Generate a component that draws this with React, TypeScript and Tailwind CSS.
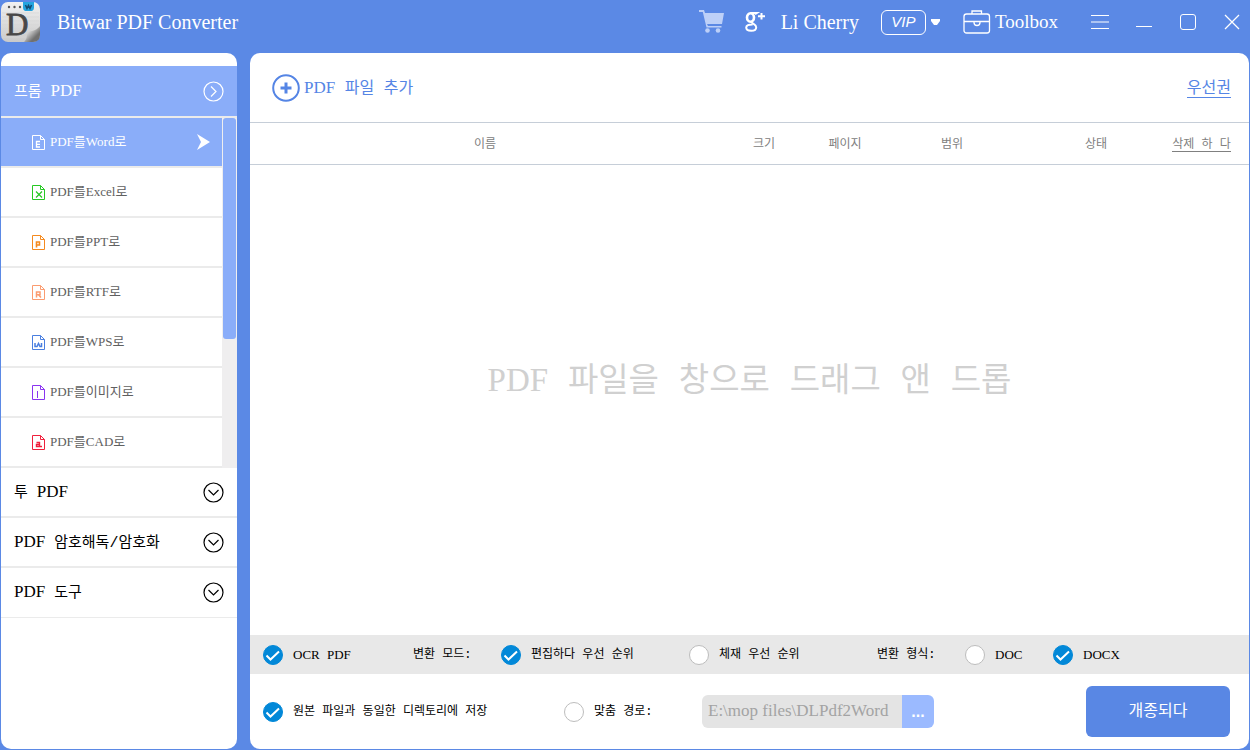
import React, { useState } from 'react';

interface Format {
  label: string;
  color: string;
  mark: React.ReactNode;
}

const FORMATS: Format[] = [
  { label: 'PDF를Word로', color: '#ffffff', mark: <path d="M8 6.500H4.500v5.500H8M4.500 9.300H8" strokeWidth="1.300" /> },
  { label: 'PDF를Excel로', color: '#27c824', mark: <path d="M4 6.500l6 6M10 6.500l-6 6" strokeWidth="1.200" /> },
  { label: 'PDF를PPT로', color: '#f58a1f', mark: <path d="M4.500 12.500V7h3v3h-3" strokeWidth="1.600" /> },
  { label: 'PDF를RTF로', color: '#fb9c70', mark: <path d="M4.500 12.500V7H8v2.800H4.500m2 0L9 12.500" strokeWidth="1.500" /> },
  { label: 'PDF를WPS로', color: '#4a7fe0', mark: <path d="M3 8v3.500h2L6.500 8.500 8 11.500h1.500V8" strokeWidth="1.500" /> },
  { label: 'PDF를이미지로', color: '#8a35f0', mark: <path d="M5.500 6v7" /> },
  { label: 'PDF를CAD로', color: '#f0203c', mark: <path d="M4.500 7.500h3v4h-3V9.500h3M7.500 11.500H10" strokeWidth="1.400" /> },
];

const SECTIONS = ['투 PDF', 'PDF 암호해독/암호화', 'PDF 도구'];

interface MixedProps {
  text: string;
  latin: string;
}

// Latin words are set in the serif face, Hangul and spaces keep the base face
const Mixed: React.FC<MixedProps> = ({ text, latin }) => (
  <>
    {text.split(/([A-Za-z0-9]+)/).map((part, i) =>
      i % 2 ? (
        <span key={i} className={`font-['Liberation_Serif',serif] ${latin}`}>{part}</span>
      ) : (
        part
      )
    )}
  </>
);

const AppLogo = () => (
  <svg width="40" height="42" viewBox="0 0 40 42" aria-hidden="true">
    <defs>
      <linearGradient id="paper" x1="0" y1="0" x2="0" y2="1">
        <stop offset="0" stopColor="#f1f1f1" />
        <stop offset="1" stopColor="#c9c9c9" />
      </linearGradient>
      <linearGradient id="curl" x1="0" y1="0" x2="1" y2="1">
        <stop offset="0.150" stopColor="#fafafa" />
        <stop offset="0.450" stopColor="#b5b5b5" />
        <stop offset="0.700" stopColor="#707070" />
      </linearGradient>
    </defs>
    <rect x="0" y="1" width="39" height="40" rx="7" fill="url(#paper)" />
    <path d="M1 12h37M1 16h37M1 20h37M1 24h37M1 28h37M1 32h33M1 36h29" stroke="#d6d6d6" strokeWidth=".7" />
    <g fill="#555">
      <circle cx="8" cy="6" r="1.200" />
      <circle cx="13.500" cy="6" r="1.200" />
      <circle cx="19" cy="6" r="1.200" />
    </g>
    <path d="M22 1h11v6q0 2-2 3h-7q-2-1-2-3z" fill="#25a4df" />
    <path d="M24.500 4l1.500 3.500L27.500 4.500 29 7.500 30.500 4" fill="none" stroke="#134a70" strokeWidth="1.500" />
    <text x="5" y="34" fontSize="31" fontFamily="Liberation Serif, serif" fill="#484848" stroke="#484848" strokeWidth=".8">D</text>
    <path d="M23 41q3-3 3-7 0-4 5-4 5-1 8-5v9q0 7-7 7z" fill="url(#curl)" />
  </svg>
);

const CartIcon = () => (
  <svg width="26" height="24" viewBox="0 0 26 24" fill="#bdd0f8" aria-hidden="true">
    <path d="M0 0h5l1 3h19l-2 11H8l1 2h13.500v1.500H7.500L3.800 2H0z" />
    <circle cx="8.500" cy="20.500" r="2.300" />
    <circle cx="19" cy="20.500" r="2.300" />
  </svg>
);

const GooglePlusIcon = () => (
  <svg width="20" height="20" viewBox="0 0 20 20" fill="none" stroke="#fff" aria-hidden="true">
    <ellipse cx="5.500" cy="5.500" rx="3.500" ry="4.200" strokeWidth="2.600" />
    <path d="M5.500.9H12L10 2.200M7 9.800c-1 2 4.200 2.200 4.200 5.400 0 2.200-2.200 3.600-5 3.600-3.200 0-5-1.200-5-3.200 0-2.200 2.600-3.200 6.500-3.100" strokeWidth="2" />
    <path d="M16.500 1v6.500M13 4.200h7" strokeWidth="2" />
  </svg>
);

const ToolboxIcon = () => (
  <svg width="28" height="24" viewBox="0 0 28 24" fill="none" stroke="#fff" strokeWidth="1.300" aria-hidden="true">
    <rect x="1" y="4" width="25.500" height="19" rx="2.500" />
    <path d="M9 4V1h9.500v3M1 11.500h9.500M17 11.500h9.500M11 11.500h6v1a3 3 0 0 1-6 0z" />
  </svg>
);

const FormatIcon: React.FC<{ color: string; mark: React.ReactNode }> = ({ color, mark }) => (
  <svg width="14" height="15" viewBox="0 0 14 15" fill="none" stroke={color} aria-hidden="true">
    <path d="M.5.5h8l4 4v10H.5z" />
    <path d="M8.500.5v4h4" />
    {mark}
  </svg>
);

const CircleChevron: React.FC<{ open?: boolean }> = ({ open }) => (
  <svg width="21" height="21" viewBox="0 0 21 21" fill="none" stroke="currentColor" strokeWidth="1.200" aria-hidden="true">
    <circle cx="10.500" cy="10.500" r="9.500" />
    <path d={open ? 'M8 5.500l5 5-5 5' : 'M5.500 8l5 5 5-5'} />
  </svg>
);

interface ChoiceProps {
  type: 'checkbox' | 'radio';
  label: string;
  name?: string;
  checked: boolean;
  onChange: () => void;
}

const Choice: React.FC<ChoiceProps> = ({ type, label, name, checked, onChange }) => (
  <label className="flex items-center gap-2.5 whitespace-nowrap">
    <span className="grid h-5 w-5 shrink-0">
      <input
        type={type}
        name={name}
        checked={checked}
        onChange={onChange}
        className="col-start-1 row-start-1 h-5 w-5 appearance-none rounded-full border border-[#bdbdbd] bg-white checked:border-[#0288d8] checked:bg-[#0288d8]"
      />
      {checked && (
        <svg className="pointer-events-none col-start-1 row-start-1" width="20" height="20" viewBox="0 0 20 20" fill="none" stroke="#fff" strokeWidth="2" aria-hidden="true">
          <path d="M3.500 10.500l4 4L16 6.500" />
        </svg>
      )}
    </span>
    <span><Mixed text={label} latin="text-[13px]" /></span>
  </label>
);

const Header = () => (
  <header className="flex h-[53px] items-start justify-between text-white font-['Liberation_Serif',serif]">
    <div className="flex h-11 items-center gap-4">
      <AppLogo />
      <h1 className="text-xl">Bitwar PDF Converter</h1>
    </div>
    <div className="flex h-11 items-center pr-[7px]">
      <button aria-label="Cart"><CartIcon /></button>
      <a href="#account" className="ml-5 flex items-center gap-4 text-xl">
        <GooglePlusIcon />
        Li Cherry
      </a>
      <button className="ml-[22px] flex items-center gap-1 font-['Liberation_Sans',sans-serif]">
        <span className="flex h-[25px] w-[45px] items-center justify-center rounded-md border border-white text-[15px] italic">VIP</span>
        <svg width="11" height="6" viewBox="0 0 11 6" fill="#fff" aria-hidden="true"><path d="M1 0h9v2L7 6H4L1 2z" /></svg>
      </button>
      <button className="ml-[22px] flex items-center gap-1 text-[19px]">
        <ToolboxIcon />
        Toolbox
      </button>
      <div className="ml-8 flex items-center gap-6">
        <button aria-label="Menu">
          <svg width="20" height="16" viewBox="0 0 20 16" stroke="#fff" aria-hidden="true"><path d="M1 1.500h18M1 8h18M1 14.500h18" /></svg>
        </button>
        <button aria-label="Minimize">
          <svg width="20" height="16" viewBox="0 0 20 16" stroke="#fff" aria-hidden="true"><path d="M2 12.500h16" /></svg>
        </button>
        <button aria-label="Maximize">
          <svg width="20" height="16" viewBox="0 0 20 16" fill="none" stroke="#fff" aria-hidden="true"><rect x="2.500" y=".5" width="15" height="15" rx="2.500" /></svg>
        </button>
        <button aria-label="Close">
          <svg width="20" height="16" viewBox="0 0 20 16" stroke="#fff" strokeWidth="1.300" aria-hidden="true"><path d="M3 1l14 14M17 1L3 15" /></svg>
        </button>
      </div>
    </div>
  </header>
);

const Sidebar = () => {
  const [selected, setSelected] = useState(0);

  return (
    <nav className="flex w-[236px] shrink-0 flex-col overflow-hidden rounded-[10px] bg-white pt-[13px] text-[15px]">
      <button className="flex h-[50px] items-center justify-between bg-[#8aadf9] px-[13px] text-white">
        <span><Mixed text="프롬 PDF" latin="text-[17px]" /></span>
        <CircleChevron open />
      </button>
      <div className="flex border-t-2 border-[#ebebeb]">
        <ul className="flex-1 text-[13px]">
          {FORMATS.map((format, i) => (
            <li key={format.label}>
              <button
                onClick={() => setSelected(i)}
                className={`flex h-[50px] w-full items-center gap-1 border-b-2 border-[#ebebeb] pl-[31px] pr-3 ${
                  selected === i ? 'bg-[#8aadf9] text-white' : 'text-[#606060]'
                }`}
              >
                <FormatIcon color={selected === i ? '#ffffff' : format.color} mark={format.mark} />
                <span><Mixed text={format.label} latin="text-[13px]" /></span>
                {selected === i && (
                  <svg className="ml-auto" width="13" height="16" viewBox="0 0 13 16" fill="#fff" aria-hidden="true">
                    <path d="M0 0l13 8-13 8 4-8z" />
                  </svg>
                )}
              </button>
            </li>
          ))}
        </ul>
        <div className="w-[15px] bg-[#efeeef] px-px">
          <div className="h-[221px] rounded-[3px] bg-[#8aadf9]" />
        </div>
      </div>
      {SECTIONS.map((section) => (
        <button key={section} className="flex h-[50px] items-center justify-between border-b-2 border-[#ebebeb] px-[13px] text-black last:border-b">
          <span><Mixed text={section} latin="text-[17px]" /></span>
          <CircleChevron />
        </button>
      ))}
    </nav>
  );
};

const FileTable = () => (
  <table className="w-full table-fixed border-y border-[#c6ced8] text-xs text-[#808080]">
    <thead>
      <tr className="h-[42px] *:pt-0.5">
        <th className="font-normal">이름</th>
        <th className="w-[88px] font-normal">크기</th>
        <th className="w-[74px] font-normal">페이지</th>
        <th className="w-[140px] font-normal">범위</th>
        <th className="w-[148px] font-normal">상태</th>
        <th className="w-[79px] whitespace-nowrap pr-4 font-normal">
          <button className="border-b border-[#808080] leading-3">삭제 하 다</button>
        </th>
      </tr>
    </thead>
  </table>
);

const Options = () => {
  const [ocr, setOcr] = useState(true);
  const [mode, setMode] = useState('edit');
  const [format, setFormat] = useState('docx');
  const [target, setTarget] = useState('same');

  return (
    <footer className="text-xs text-black">
      <div className="grid h-[39px] grid-cols-[150px_88px_188px_188px_88px_88px_1fr] items-center bg-[#e8e8e8] pl-[13px]">
        <Choice type="checkbox" label="OCR PDF" checked={ocr} onChange={() => setOcr(!ocr)} />
        <span>변환 모드:</span>
        <Choice type="radio" name="mode" label="편집하다 우선 순위" checked={mode === 'edit'} onChange={() => setMode('edit')} />
        <Choice type="radio" name="mode" label="체재 우선 순위" checked={mode === 'layout'} onChange={() => setMode('layout')} />
        <span>변환 형식:</span>
        <Choice type="radio" name="format" label="DOC" checked={format === 'doc'} onChange={() => setFormat('doc')} />
        <Choice type="radio" name="format" label="DOCX" checked={format === 'docx'} onChange={() => setFormat('docx')} />
      </div>
      <div className="grid h-[75px] grid-cols-[301px_138px_232px_1fr] items-center pl-[13px] pr-[19px]">
        <Choice type="radio" name="target" label="원본 파일과 동일한 디렉토리에 저장" checked={target === 'same'} onChange={() => setTarget('same')} />
        <Choice type="radio" name="target" label="맞춤 경로:" checked={target === 'custom'} onChange={() => setTarget('custom')} />
        <div className="flex h-[33px] overflow-hidden rounded-md">
          <input
            aria-label="맞춤 경로"
            disabled
            defaultValue="E:\mop files\DLPdf2Word"
            className="w-0 flex-1 bg-[#e4e4e4] px-[6px] text-[17px] text-[#a3a3a3] font-['Liberation_Serif',serif]"
          />
          <button className="w-8 bg-[#9bbaff] text-base font-bold text-white font-['Liberation_Sans',sans-serif]">...</button>
        </div>
        <button className="h-[51px] w-36 justify-self-end rounded-md bg-[#5987e4] text-base text-white">개종되다</button>
      </div>
    </footer>
  );
};

export default function App() {
  return (
    <div className="flex min-h-screen flex-col bg-[#5b89e5] pl-px pr-px pb-px font-['Liberation_Mono','Noto_Sans_CJK_KR',monospace]">
      <Header />
      <div className="flex flex-1 gap-[13px]">
        <Sidebar />
        <main className="flex min-w-0 flex-1 flex-col overflow-hidden rounded-[10px] bg-white">
          <div className="flex h-[69px] items-center justify-between pl-[22px] pr-[18px] text-base text-[#5585e5]">
            <button className="flex items-center gap-1">
              <svg width="28" height="28" viewBox="0 0 28 28" fill="none" stroke="#5585e5" aria-hidden="true">
                <circle cx="14" cy="14" r="12.800" strokeWidth="2" />
                <path d="M14 8.500v11M8.500 14h11" strokeWidth="3" />
              </svg>
              <span><Mixed text="PDF 파일 추가" latin="text-[17px]" /></span>
            </button>
            <a href="#priority" className="border-b border-[#5585e5] pt-1 leading-4">우선권</a>
          </div>
          <FileTable />
          <div className="flex flex-1 items-center justify-center pb-9 text-[33px] text-[#d0d0d0]">
            <p><Mixed text="PDF 파일을 창으로 드래그 앤 드롭" latin="text-[33px]" /></p>
          </div>
          <Options />
        </main>
      </div>
    </div>
  );
}
